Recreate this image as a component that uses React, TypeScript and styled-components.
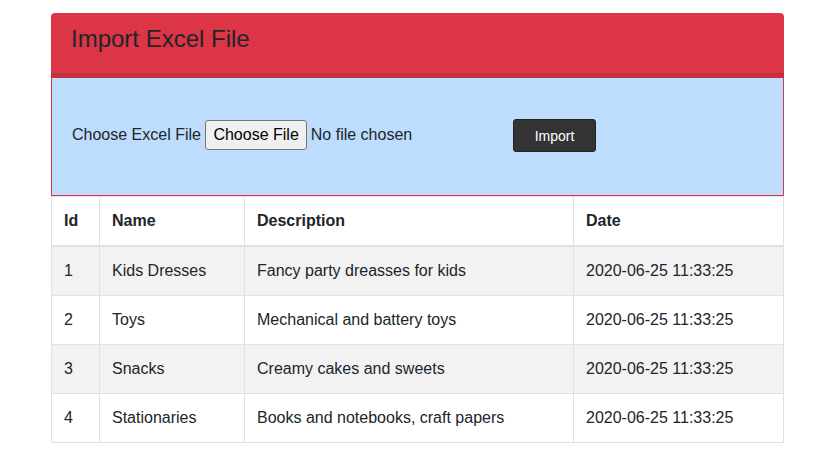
import React from "react";
import styled, { createGlobalStyle } from "styled-components";

interface IRow {
  id: number;
  name: string;
  description: string;
  date: string;
}

const rows: IRow[] = [
  { id: 1, name: "Kids Dresses", description: "Fancy party dreasses for kids", date: "2020-06-25 11:33:25" },
  { id: 2, name: "Toys", description: "Mechanical and battery toys", date: "2020-06-25 11:33:25" },
  { id: 3, name: "Snacks", description: "Creamy cakes and sweets", date: "2020-06-25 11:33:25" },
  { id: 4, name: "Stationaries", description: "Books and notebooks, craft papers", date: "2020-06-25 11:33:25" },
];

const App: React.FC = () => {
  return (
    <Page>
      <GlobalStyle />
      <Card>
        <CardHeader>Import Excel File</CardHeader>
        <CardBody>
          <FileGroup>
            Choose Excel File{" "}
            <FileButton>Choose File</FileButton>
            <FileName>No file chosen</FileName>
          </FileGroup>
          <ImportButton type="button">Import</ImportButton>
        </CardBody>
      </Card>
      <Table>
        <colgroup>
          <col style={{ width: 48 }} />
          <col style={{ width: 145 }} />
          <col style={{ width: 329 }} />
          <col />
        </colgroup>
        <thead>
          <tr>
            <Th>Id</Th>
            <Th>Name</Th>
            <Th>Description</Th>
            <Th>Date</Th>
          </tr>
        </thead>
        <tbody>
          {rows.map((r, i) => (
            <Tr key={r.id} striped={i % 2 === 0}>
              <Td>{r.id}</Td>
              <Td>{r.name}</Td>
              <Td>{r.description}</Td>
              <Td>{r.date}</Td>
            </Tr>
          ))}
        </tbody>
      </Table>
    </Page>
  );
};

export default App;

const GlobalStyle = createGlobalStyle`
  body {
    margin: 0;
    background: #fff;
    font-family: "Liberation Sans", Arial, sans-serif;
    font-size: 16px;
    color: #212529;
  }
`;

const Page = styled.div`
  width: 733px;
  margin: 13px 0 0 51px;
`;

const Card = styled.div`
  border-radius: 4px 4px 0 0;
  overflow: hidden;
`;

const CardHeader = styled.div`
  background-color: #dc3545;
  border-bottom: 5px solid #c6303e;
  height: 48px;
  padding: 12px 20px 0;
  font-size: 24px;
  line-height: 28.8px;
  color: #212529;
`;

const CardBody = styled.div`
  background-color: #bddcfe;
  border: 1px solid #dc3545;
  border-top: none;
  height: 115px;
  padding: 0 20px 2px;
  display: flex;
  align-items: center;
`;

const FileGroup = styled.div`
  width: 441px;
  margin-top: -1px;
  display: flex;
  align-items: center;
  white-space: pre;
  line-height: 24px;
`;

const FileButton = styled.span`
  height: 30px;
  box-sizing: border-box;
  padding: 0 7px;
  display: inline-flex;
  align-items: center;
  background: #efefef;
  border: 1px solid #767676;
  border-radius: 3px;
  color: #000;
`;

const FileName = styled.span`
  margin-left: 4px;
`;

const ImportButton = styled.button`
  width: 83px;
  height: 33px;
  background: #333;
  border: 1px solid #222;
  border-radius: 3px;
  color: #fff;
  font-family: "Liberation Sans", Arial, sans-serif;
  font-size: 14px;
`;

const Table = styled.table`
  width: 733px;
  border-collapse: collapse;
  table-layout: fixed;
`;

const Th = styled.th`
  text-align: left;
  font-weight: bold;
  padding: 12px;
  line-height: 24px;
  border: 1px solid #dee2e6;
  border-bottom: 2px solid #dee2e6;
`;

const Tr = styled.tr<{ striped: boolean }>`
  background: ${(p) => (p.striped ? "#f2f2f2" : "#fff")};
`;

const Td = styled.td`
  padding: 12px;
  line-height: 24px;
  border: 1px solid #dee2e6;
`;
